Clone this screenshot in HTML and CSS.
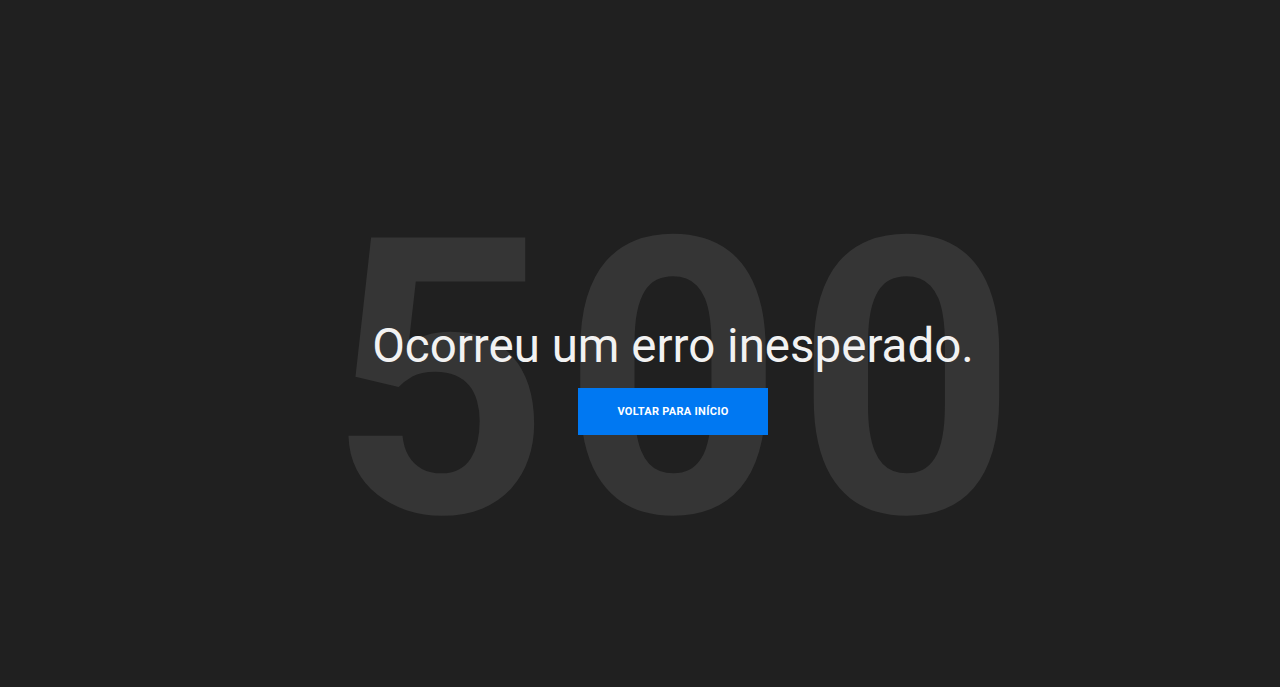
FILE: index.html
```html
<!DOCTYPE html>
<html lang="pt-BR">
<head>
<meta charset="utf-8">
<title>Erro 500</title>
<link rel="stylesheet" href="styles.css">
</head>
<body>
<main class="page">
  <section class="error">
    <div class="error-code" aria-hidden="true">500</div>
    <div class="error-content">
      <h1 class="error-title">Ocorreu um erro inesperado.</h1>
      <a class="btn-home" href="#">VOLTAR PARA INÍCIO</a>
    </div>
  </section>
</main>
</body>
</html>
```
FILE: styles.css
```css
html, body {
  margin: 0;
  padding: 0;
  height: 100%;
}
body {
  background: #202020;
  color: #f5f5f5;
  font-family: Roboto, "Liberation Sans", sans-serif;
  overflow: hidden;
}
.page {
  height: 100%;
  display: flex;
  align-items: center;
  justify-content: center;
  box-sizing: border-box;
  padding: 62px 0 0 66px;
}
.error {
  display: grid;
  place-items: center;
}
.error-code,
.error-content {
  grid-area: 1 / 1;
}
.error-code {
  font-size: 386px;
  line-height: 1;
  font-weight: 700;
  color: #353535;
  letter-spacing: 12px;
  margin-right: -12px;
  margin-top: 10px;
  user-select: none;
}
.error-content {
  display: flex;
  flex-direction: column;
  align-items: center;
  gap: 14px;
  margin-top: 4px;
}
.error-title {
  margin: 0;
  font-size: 47.5px;
  font-weight: 400;
  line-height: 56px;
  color: #f2f2f2;
}
.btn-home {
  display: flex;
  align-items: center;
  justify-content: center;
  width: 190px;
  height: 47px;
  background: #0078f2;
  color: #fff;
  text-decoration: none;
  font-size: 11px;
  font-weight: 700;
  letter-spacing: 0.3px;
}
```
